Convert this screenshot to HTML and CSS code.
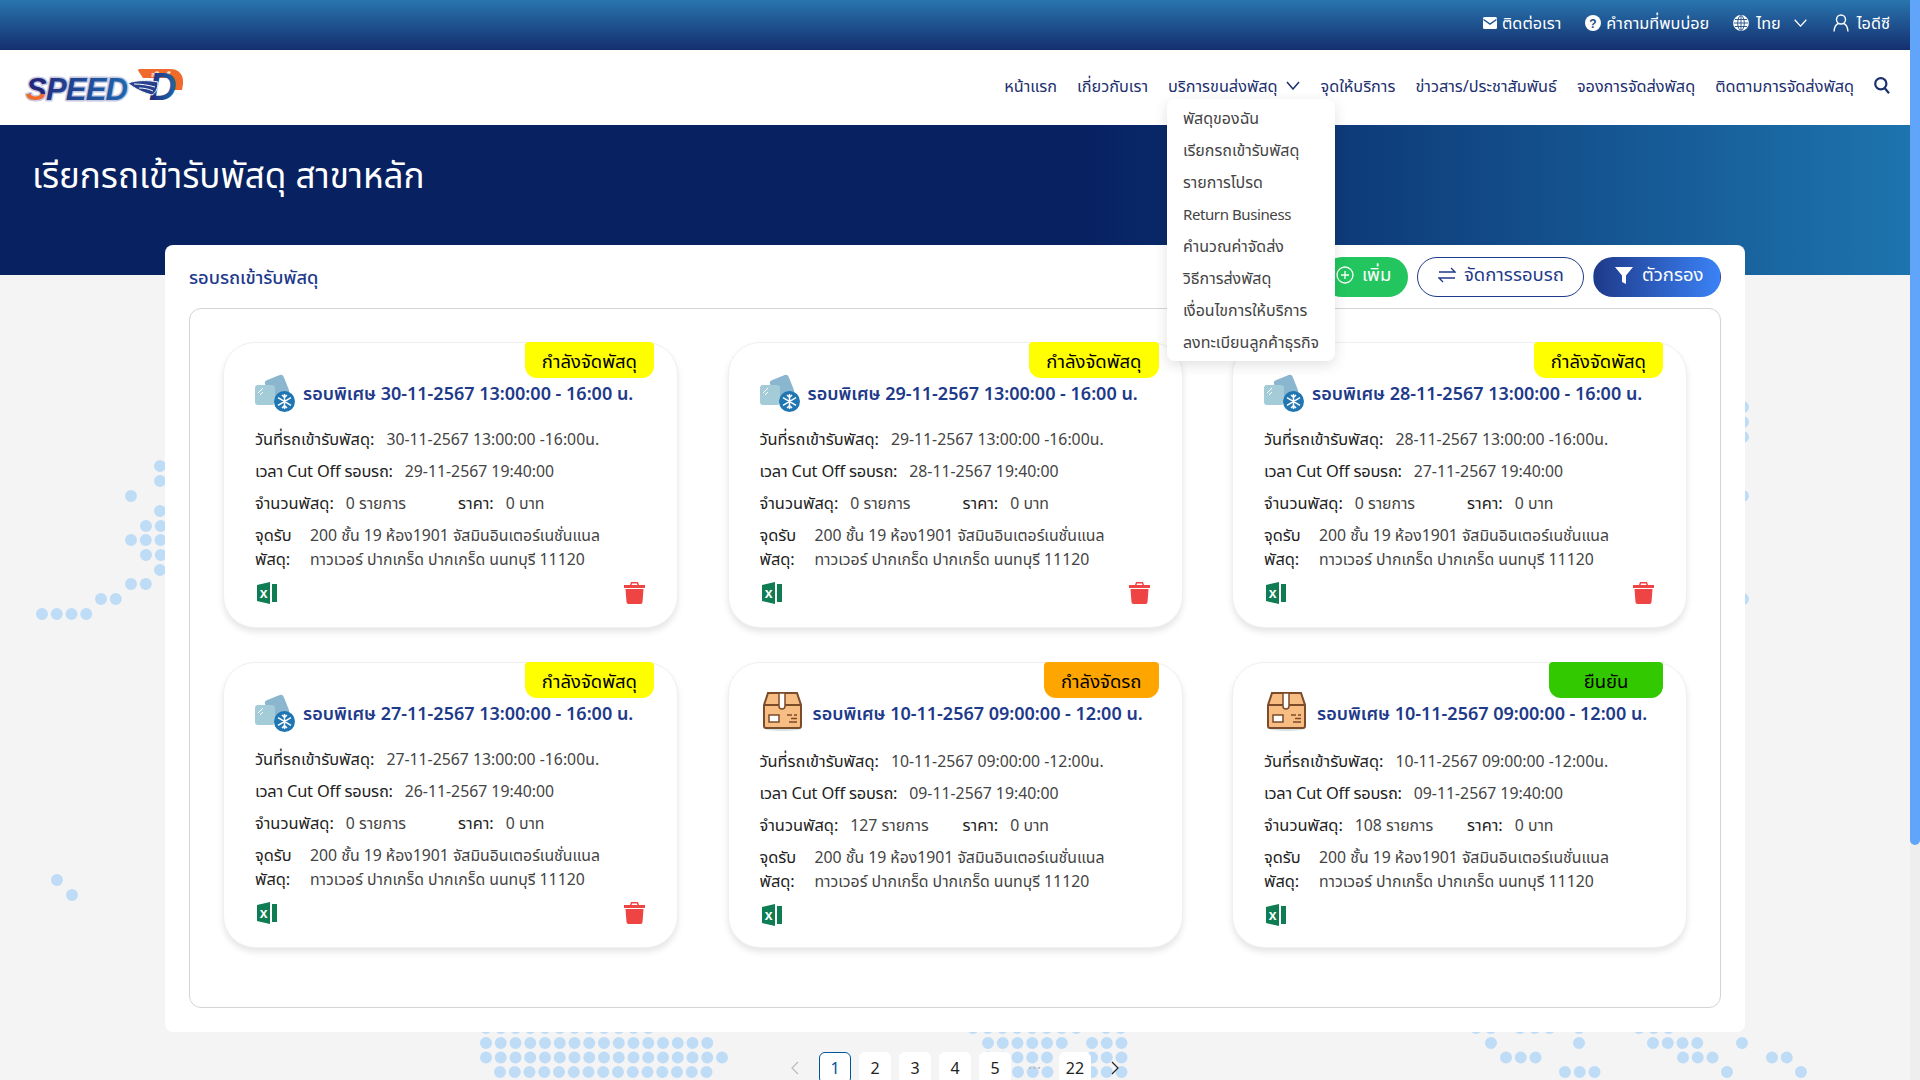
FILE: index.html
```html
<!DOCTYPE html>
<html lang="th">
<head>
<meta charset="utf-8">
<title>เรียกรถเข้ารับพัสดุ</title>
<link rel="stylesheet" href="styles.css">
</head>
<body>
<svg width="0" height="0" class="defs">
  <defs>
    <linearGradient id="logoBlue" x1="0" y1="0" x2="1" y2="0"><stop offset="0" stop-color="#23287a"/><stop offset="1" stop-color="#1d67ae"/></linearGradient>
    <linearGradient id="logoS" x1="0" y1="0" x2="0" y2="1"><stop offset="0" stop-color="#23287a"/><stop offset=".62" stop-color="#23287a"/><stop offset=".63" stop-color="#ef6a2b"/><stop offset="1" stop-color="#ef6a2b"/></linearGradient>
    <g id="ice">
      <rect x="12" y="5" width="20" height="20" rx="3" fill="#8ab6cf" transform="rotate(-22 22 15)"/>
      <rect x="0" y="13" width="20" height="20" rx="3" fill="#a3ccd8"/>
      <path d="M3 21l5-5M5 23l3-3" stroke="#fff" stroke-width="1" fill="none"/>
      <circle cx="29.500" cy="29.500" r="10.500" fill="#1f76b3"/>
      <path d="M29.500 22v15M23 25.700l13 7.600M23 33.300l13-7.600M27 23l2.500 2.500 2.500-2.500M27 36l2.500-2.500 2.500 2.500" stroke="#fff" stroke-width="1.500" fill="none"/>
    </g>
    <g id="box">
      <ellipse cx="19.500" cy="36.500" rx="18" ry="2.500" fill="#d4e3e3"/>
      <path d="M1 13L5 1h29l4 12v21a2 2 0 0 1-2 2H3a2 2 0 0 1-2-2z" fill="#f8bd82" stroke="#7b4b2a" stroke-width="2"/>
      <path d="M1 13h37" stroke="#7b4b2a" stroke-width="2"/>
      <path d="M16 1h6v13a3 3 0 0 1-6 0z" fill="#fff" stroke="#7b4b2a" stroke-width="1.500"/>
      <rect x="6" y="23" width="10" height="7" fill="#fff" stroke="#7b4b2a" stroke-width="1.500"/>
      <path d="M24 23h5M31 23h3M28 26.500h6M26 30h8" stroke="#7b4b2a" stroke-width="1.500"/>
    </g>
    <g id="excel">
      <path d="M0 3L13 0v22L0 19z" fill="#107c54"/>
      <path d="M15 2h5v18h-5z" fill="#107c54"/>
      <text x="2.700" y="15.500" class="excel-x">x</text>
    </g>
    <g id="trash">
      <path d="M7 0h7l1 3h6v3H0V3h6z" fill="#ef4444"/>
      <path d="M8 1.500h5l.5 1.500h-6z" fill="#fff"/>
      <path d="M1.500 7h18l-1 13a2 2 0 0 1-2 2h-12a2 2 0 0 1-2-2z" fill="#ef4444"/>
    </g>
  </defs>
</svg>

<div class="page">
  <svg class="dots" width="1910" height="1080" viewBox="0 0 1910 1080" aria-hidden="true">
    <path class="dots-line" d="M160 466h.01M160 481h.01M131 496h.01M160 511h.01M146 526H161M131 540H161M146 555H161M160 570h.01M131 584H147M101 599H117M42 614H88M57 880h.01M72 895h.01
      M486 1028H663M486 1043H708M486 1057.500H723M500 1072H708
      M973 1028H1078M988 1043H1063M988 1057.500H1048M1018 1072H1048M1106 1028H1122M1092 1043H1122M1092 1057.500H1122M1092 1072H1122
      M1476 1028H1492M1520 1028H1551M1579 1028h.01M1639 1028H1669M1491 1043h.01M1579 1043h.01M1653 1043H1699M1742 1043h.01M1506 1057.500H1536M1683 1057.500H1713M1772 1057.500H1787M1565 1072H1595M1727 1072h.01M1801 1072h.01
      M1743 407h.01M1743 422h.01M1743 437h.01M1743 496h.01M1743 599h.01"/>
  </svg>

  <header class="topbar">
    <a class="top-item">
      <svg width="14" height="12" viewBox="0 0 14 12"><rect width="14" height="12" rx="1.500" fill="#fff"/><path d="M0.500 2.500L7 7l6.500-4.500" fill="none" stroke="#1f5590" stroke-width="1.500"/></svg>
      <span>ติดต่อเรา</span>
    </a>
    <a class="top-item">
      <svg width="16" height="16" viewBox="0 0 16 16"><circle cx="8" cy="8" r="8" fill="#fff"/><text x="8" y="12.500" class="q-mark">?</text></svg>
      <span>คำถามที่พบบ่อย</span>
    </a>
    <a class="top-item top-lang">
      <svg width="16" height="16" viewBox="0 0 16 16" fill="none" stroke="#fff" stroke-width="1.300"><circle cx="8" cy="8" r="7.300" fill="#fff"/><g stroke="#1f4c86" stroke-width=".9"><ellipse cx="8" cy="8" rx="3.300" ry="7.300"/><path d="M8 .7v14.600M.7 8h14.600M1.800 4.500h12.400M1.800 11.500h12.400"/></g></svg>
      <span>ไทย</span>
      <svg class="top-chevron" width="13" height="8" viewBox="0 0 13 8" fill="none" stroke="#fff" stroke-width="1.300"><path d="M.7.7l5.800 6.400L12.300.7"/></svg>
    </a>
    <a class="top-item top-user">
      <svg width="16" height="18" viewBox="0 0 16 18" fill="none" stroke="#fff" stroke-width="1.400"><circle cx="8" cy="5.500" r="4.500"/><path d="M1 17.500c.4-4.500 2.500-7.500 4.500-8M15 17.500c-.4-4.500-2.500-7.500-4.500-8"/></svg>
      <span>ไอดีซี</span>
    </a>
  </header>

  <nav class="navbar">
    <svg class="logo" width="162" height="56" viewBox="0 -9 162 56" aria-label="Speed D">
      <path d="M114 1.500c0-1 1-1.500 2-1.500h30c9 0 14 6 13 15l-1 6h-8l-1-12h-30z" fill="#ef6a2b"/>
      <text x="127" y="7.500" class="logo-thai">สปีด ดี</text>
      <text x="125" y="31" class="logo-d">D</text>
      <path d="M104 14c9-3 20-3 30-1 0 6-2 11-6 13-8-2-17-6-24-12z" fill="#27408e" stroke="#fff" stroke-width="1"/>
      <path d="M110 15c7 0 14 1 21 3M115 19c5 0 10 1 14 3" stroke="#fff" stroke-width="1" fill="none"/>
      <text x="2" y="31" class="logo-text" textLength="102"><tspan class="logo-s">S</tspan>PEED</text>
    </svg>
    <ul class="menu">
      <li class="menu-item">หน้าแรก</li>
      <li class="menu-item">เกี่ยวกับเรา</li>
      <li class="menu-item menu-open">
        <span>บริการขนส่งพัสดุ</span>
        <svg class="menu-chevron" width="14" height="9" viewBox="0 0 14 9" fill="none" stroke="#1c2f6e" stroke-width="1.500"><path d="M1 1l6 7 6-7"/></svg>
        <ul class="dropdown">
          <li>พัสดุของฉัน</li>
          <li>เรียกรถเข้ารับพัสดุ</li>
          <li>รายการโปรด</li>
          <li class="dropdown-latin">Return Business</li>
          <li>คำนวณค่าจัดส่ง</li>
          <li>วิธีการส่งพัสดุ</li>
          <li>เงื่อนไขการให้บริการ</li>
          <li>ลงทะเบียนลูกค้าธุรกิจ</li>
        </ul>
      </li>
      <li class="menu-item">จุดให้บริการ</li>
      <li class="menu-item">ข่าวสาร/ประชาสัมพันธ์</li>
      <li class="menu-item">จองการจัดส่งพัสดุ</li>
      <li class="menu-item">ติดตามการจัดส่งพัสดุ</li>
      <li class="menu-item">
        <svg width="16" height="17" viewBox="0 0 16 17" fill="none" stroke="#1c2f6e" stroke-width="2.200"><circle cx="6.800" cy="6.800" r="5.600"/><path d="M10.800 11.200l4.200 5"/></svg>
      </li>
    </ul>
  </nav>

  <section class="banner">
    <h1>เรียกรถเข้ารับพัสดุ สาขาหลัก</h1>
  </section>

  <main class="panel">
    <div class="panel-head">
      <h2>รอบรถเข้ารับพัสดุ</h2>
      <div class="actions">
        <button class="btn btn-add">
          <svg width="18" height="18" viewBox="0 0 18 18" fill="none" stroke="#fff" stroke-width="1.300"><circle cx="9" cy="9" r="8"/><path d="M9 5v8M5 9h8"/></svg>
          เพิ่ม
        </button>
        <button class="btn btn-manage">
          <svg width="18" height="16" viewBox="0 0 18 16" fill="none" stroke="#1e3a8a" stroke-width="1.300"><path d="M1 5h16L13 1M17 11H1l4 4"/></svg>
          จัดการรอบรถ
        </button>
        <button class="btn btn-filter">
          <svg width="20" height="20" viewBox="0 0 20 20" fill="#fff"><path d="M1 2h18l-7 8.500V19l-4-2v-6.500z"/></svg>
          ตัวกรอง
        </button>
      </div>
    </div>

    <div class="rounds">
      <article class="round">
        <span class="badge badge-packing">กำลังจัดพัสดุ</span>
        <div class="round-head">
          <svg class="round-icon" width="40" height="40" viewBox="0 0 40 40"><use href="#ice"/></svg>
          <h3>รอบพิเศษ 30-11-2567 13:00:00 - 16:00 น.</h3>
        </div>
        <p class="line"><b>วันที่รถเข้ารับพัสดุ:</b><span>30-11-2567 13:00:00 -16:00น.</span></p>
        <p class="line"><b>เวลา Cut Off รอบรถ:</b><span>29-11-2567 19:40:00</span></p>
        <div class="line-pair"><p class="line"><b>จำนวนพัสดุ:</b><span>0 รายการ</span></p><p class="line"><b>ราคา:</b><span>0 บาท</span></p></div>
        <div class="address"><b>จุดรับ<br>พัสดุ:</b><span>200 ชั้น 19 ห้อง1901 จัสมินอินเตอร์เนชั่นแนล<br>ทาวเวอร์ ปากเกร็ด ปากเกร็ด นนทบุรี 11120</span></div>
        <div class="round-foot">
          <svg class="excel" width="20" height="22" viewBox="0 0 20 22"><use href="#excel"/></svg>
          <svg width="21" height="22" viewBox="0 0 21 22"><use href="#trash"/></svg>
        </div>
      </article>

      <article class="round">
        <span class="badge badge-packing">กำลังจัดพัสดุ</span>
        <div class="round-head">
          <svg class="round-icon" width="40" height="40" viewBox="0 0 40 40"><use href="#ice"/></svg>
          <h3>รอบพิเศษ 29-11-2567 13:00:00 - 16:00 น.</h3>
        </div>
        <p class="line"><b>วันที่รถเข้ารับพัสดุ:</b><span>29-11-2567 13:00:00 -16:00น.</span></p>
        <p class="line"><b>เวลา Cut Off รอบรถ:</b><span>28-11-2567 19:40:00</span></p>
        <div class="line-pair"><p class="line"><b>จำนวนพัสดุ:</b><span>0 รายการ</span></p><p class="line"><b>ราคา:</b><span>0 บาท</span></p></div>
        <div class="address"><b>จุดรับ<br>พัสดุ:</b><span>200 ชั้น 19 ห้อง1901 จัสมินอินเตอร์เนชั่นแนล<br>ทาวเวอร์ ปากเกร็ด ปากเกร็ด นนทบุรี 11120</span></div>
        <div class="round-foot">
          <svg class="excel" width="20" height="22" viewBox="0 0 20 22"><use href="#excel"/></svg>
          <svg width="21" height="22" viewBox="0 0 21 22"><use href="#trash"/></svg>
        </div>
      </article>

      <article class="round">
        <span class="badge badge-packing">กำลังจัดพัสดุ</span>
        <div class="round-head">
          <svg class="round-icon" width="40" height="40" viewBox="0 0 40 40"><use href="#ice"/></svg>
          <h3>รอบพิเศษ 28-11-2567 13:00:00 - 16:00 น.</h3>
        </div>
        <p class="line"><b>วันที่รถเข้ารับพัสดุ:</b><span>28-11-2567 13:00:00 -16:00น.</span></p>
        <p class="line"><b>เวลา Cut Off รอบรถ:</b><span>27-11-2567 19:40:00</span></p>
        <div class="line-pair"><p class="line"><b>จำนวนพัสดุ:</b><span>0 รายการ</span></p><p class="line"><b>ราคา:</b><span>0 บาท</span></p></div>
        <div class="address"><b>จุดรับ<br>พัสดุ:</b><span>200 ชั้น 19 ห้อง1901 จัสมินอินเตอร์เนชั่นแนล<br>ทาวเวอร์ ปากเกร็ด ปากเกร็ด นนทบุรี 11120</span></div>
        <div class="round-foot">
          <svg class="excel" width="20" height="22" viewBox="0 0 20 22"><use href="#excel"/></svg>
          <svg width="21" height="22" viewBox="0 0 21 22"><use href="#trash"/></svg>
        </div>
      </article>

      <article class="round">
        <span class="badge badge-packing">กำลังจัดพัสดุ</span>
        <div class="round-head">
          <svg class="round-icon" width="40" height="40" viewBox="0 0 40 40"><use href="#ice"/></svg>
          <h3>รอบพิเศษ 27-11-2567 13:00:00 - 16:00 น.</h3>
        </div>
        <p class="line"><b>วันที่รถเข้ารับพัสดุ:</b><span>27-11-2567 13:00:00 -16:00น.</span></p>
        <p class="line"><b>เวลา Cut Off รอบรถ:</b><span>26-11-2567 19:40:00</span></p>
        <div class="line-pair"><p class="line"><b>จำนวนพัสดุ:</b><span>0 รายการ</span></p><p class="line"><b>ราคา:</b><span>0 บาท</span></p></div>
        <div class="address"><b>จุดรับ<br>พัสดุ:</b><span>200 ชั้น 19 ห้อง1901 จัสมินอินเตอร์เนชั่นแนล<br>ทาวเวอร์ ปากเกร็ด ปากเกร็ด นนทบุรี 11120</span></div>
        <div class="round-foot">
          <svg class="excel" width="20" height="22" viewBox="0 0 20 22"><use href="#excel"/></svg>
          <svg width="21" height="22" viewBox="0 0 21 22"><use href="#trash"/></svg>
        </div>
      </article>

      <article class="round round-box">
        <span class="badge badge-truck">กำลังจัดรถ</span>
        <div class="round-head">
          <svg class="round-icon" width="40" height="40" viewBox="0 0 40 40"><use href="#box"/></svg>
          <h3>รอบพิเศษ 10-11-2567 09:00:00 - 12:00 น.</h3>
        </div>
        <p class="line"><b>วันที่รถเข้ารับพัสดุ:</b><span>10-11-2567 09:00:00 -12:00น.</span></p>
        <p class="line"><b>เวลา Cut Off รอบรถ:</b><span>09-11-2567 19:40:00</span></p>
        <div class="line-pair"><p class="line"><b>จำนวนพัสดุ:</b><span>127 รายการ</span></p><p class="line"><b>ราคา:</b><span>0 บาท</span></p></div>
        <div class="address"><b>จุดรับ<br>พัสดุ:</b><span>200 ชั้น 19 ห้อง1901 จัสมินอินเตอร์เนชั่นแนล<br>ทาวเวอร์ ปากเกร็ด ปากเกร็ด นนทบุรี 11120</span></div>
        <div class="round-foot">
          <svg class="excel" width="20" height="22" viewBox="0 0 20 22"><use href="#excel"/></svg>
        </div>
      </article>

      <article class="round round-box">
        <span class="badge badge-ok">ยืนยัน</span>
        <div class="round-head">
          <svg class="round-icon" width="40" height="40" viewBox="0 0 40 40"><use href="#box"/></svg>
          <h3>รอบพิเศษ 10-11-2567 09:00:00 - 12:00 น.</h3>
        </div>
        <p class="line"><b>วันที่รถเข้ารับพัสดุ:</b><span>10-11-2567 09:00:00 -12:00น.</span></p>
        <p class="line"><b>เวลา Cut Off รอบรถ:</b><span>09-11-2567 19:40:00</span></p>
        <div class="line-pair"><p class="line"><b>จำนวนพัสดุ:</b><span>108 รายการ</span></p><p class="line"><b>ราคา:</b><span>0 บาท</span></p></div>
        <div class="address"><b>จุดรับ<br>พัสดุ:</b><span>200 ชั้น 19 ห้อง1901 จัสมินอินเตอร์เนชั่นแนล<br>ทาวเวอร์ ปากเกร็ด ปากเกร็ด นนทบุรี 11120</span></div>
        <div class="round-foot">
          <svg class="excel" width="20" height="22" viewBox="0 0 20 22"><use href="#excel"/></svg>
        </div>
      </article>
    </div>
  </main>

  <ul class="pager">
    <li class="pager-arrow pager-off"><svg width="10" height="14" viewBox="0 0 10 14" fill="none" stroke="currentColor" stroke-width="1.200"><path d="M8 1L2 7l6 6"/></svg></li>
    <li class="pager-num pager-on">1</li>
    <li class="pager-num">2</li>
    <li class="pager-num">3</li>
    <li class="pager-num">4</li>
    <li class="pager-num">5</li>
    <li class="pager-more">•••</li>
    <li class="pager-num">22</li>
    <li class="pager-arrow"><svg width="10" height="14" viewBox="0 0 10 14" fill="none" stroke="currentColor" stroke-width="1.200"><path d="M2 1l6 6-6 6"/></svg></li>
  </ul>
</div>

<div class="scrollbar"><div class="scrollbar-thumb"></div></div>
</body>
</html>
```

FILE: styles.css
```css
* { box-sizing: border-box; }
html, body { margin: 0; padding: 0; height: 1080px; overflow: hidden; }
body {
  background: #f4f4f4;
  font-family: "Noto Sans", "Open Sans", "Noto Sans Thai", sans-serif;
  color: #333;
}
ul { list-style: none; margin: 0; padding: 0; }
h1, h2, h3, p { margin: 0; font-weight: 400; }
.defs { position: absolute; }

.page { position: relative; width: 1910px; height: 1080px; overflow: hidden; }
.dots { position: absolute; left: 0; top: 0; }
.dots-line { fill: none; stroke: #bfdcf7; stroke-width: 12; stroke-linecap: round; stroke-dasharray: 0 14.75; }

.topbar {
  position: relative;
  height: 50px;
  display: flex;
  justify-content: flex-end;
  align-items: center;
  gap: 24px;
  padding: 0 20px 4px 0;
  background: linear-gradient(180deg, #2875af 0%, #152f6e 100%);
  color: #fff;
  font-size: 16.300px;
  line-height: 24px;
}
.top-item { display: flex; align-items: center; gap: 5px; }
.top-lang { gap: 7px; }
.top-chevron { margin-left: 6px; }
.top-user { gap: 8px; margin-left: 2px; }
.q-mark { font: 700 12px "Liberation Sans", sans-serif; fill: #1f4c86; text-anchor: middle; }

.navbar {
  position: relative;
  z-index: 5;
  height: 75px;
  background: #fff;
  display: flex;
  align-items: center;
  justify-content: space-between;
  padding: 0 20px 0 24px;
}
.logo { display: block; }
.logo-text {
  font: italic 700 31px "Liberation Sans", sans-serif;
  fill: url(#logoBlue);
  stroke: #c9c9e2;
  stroke-width: 3;
  stroke-linejoin: round;
  paint-order: stroke fill;
}
.logo-s { fill: url(#logoS); }
.logo-d { font: italic 700 38px "Liberation Sans", sans-serif; fill: url(#logoBlue); }
.logo-thai { font: 400 7px "Noto Sans", sans-serif; fill: #fff; }
.menu { display: flex; align-items: center; gap: 20px; margin-top: -4px; font-size: 16.250px; color: #1c2f6e; line-height: 24px; }
.menu-item { display: flex; align-items: center; white-space: nowrap; }
.menu-open { position: relative; gap: 9px; }
.dropdown {
  position: absolute;
  left: -1px;
  top: 25px;
  width: 168px;
  padding: 3px 16px;
  background: #fff;
  border-radius: 8px;
  box-shadow: 0 4px 14px rgba(0, 0, 0, .12);
  color: #444;
  font-size: 16px;
}
.dropdown li { height: 32px; line-height: 32px; }
.dropdown .dropdown-latin { font-size: 15px; letter-spacing: -.4px; }

.banner {
  height: 150px;
  padding: 30px 32px 0;
  background: linear-gradient(90deg, #072161 0%, #072161 57%, #1d74ae 100%);
  color: #fff;
}
.banner h1 { font-size: 35px; line-height: 40px; }

.panel {
  position: relative;
  z-index: 1;
  width: 1580px;
  height: 787px;
  margin: -30px 0 0 165px;
  padding: 0 24px;
  background: #fff;
  border-radius: 8px;
}
.panel-head { height: 63px; display: flex; justify-content: space-between; padding-top: 12px; }
.panel-head h2 { font-size: 18.300px; font-weight: 500; line-height: 40px; color: #1e3a8a; }
.actions { display: flex; gap: 9px; height: 40px; }
.btn {
  display: flex;
  align-items: center;
  gap: 8px;
  height: 40px;
  border-radius: 20px;
  font: inherit;
  font-size: 18.500px;
  border: 1px solid transparent;
  white-space: nowrap;
}
.btn-add { background: #22c55e; color: #fff; width: 86px; padding: 0 0 4px 13px; }
.btn-manage { background: #fff; color: #1e3a8a; border-color: #1e3a8a; width: 167px; padding: 0 0 4px 20px; }
.btn-filter { background: linear-gradient(90deg, #1e3a8a, #3b82f6); color: #fff; width: 128px; padding: 0 0 4px 20px; }

.rounds {
  height: 700px;
  display: grid;
  grid-template-columns: repeat(3, 455px);
  grid-auto-rows: 286px;
  column-gap: 49.500px;
  row-gap: 34px;
  padding: 33px;
  border: 1px solid #d4d4d4;
  border-radius: 12px;
}
.round {
  position: relative;
  padding: 29px 31px 23px;
  background: #fff;
  border-radius: 32px;
  border: 1px solid #f0f0f0;
  box-shadow: 0 4px 6px rgba(0, 0, 0, .1);
  font-size: 15.800px;
  line-height: 24px;
  color: #444;
}
.round-box { padding-bottom: 21px; }
.round-head { display: flex; align-items: center; gap: 8px; height: 40px; margin-bottom: 15px; }
.round-box .round-head { gap: 10px; margin-bottom: 17px; }
.round-box .round-icon { margin-left: 3px; }
.round-head h3 { margin-top: 2px; font-size: 18px; font-weight: 600; line-height: 24px; color: #1e3a8a; white-space: nowrap; }
.badge {
  position: absolute;
  top: -1px;
  right: 23px;
  height: 36px;
  padding: 0 17px;
  border-radius: 4px 4px 12px 12px;
  font-size: 18.500px;
  line-height: 38px;
  color: #000;
}
.badge-packing { background: #ff0; }
.badge-truck { background: #ffa500; }
.badge-ok { background: #33c900; width: 114px; text-align: center; }
.line { margin-bottom: 8px; white-space: nowrap; }
.line b { font-size: 16.400px; font-weight: 400; color: #222; margin-right: 12px; }
.round > .line:nth-of-type(2) b { letter-spacing: -.2px; }
.line-pair { display: grid; grid-template-columns: 203px 1fr; }
.address { display: grid; grid-template-columns: 55px 1fr; margin-bottom: 11px; white-space: nowrap; }
.address b { font-size: 16.400px; font-weight: 400; color: #222; }
.round-foot { display: flex; justify-content: space-between; height: 22px; padding: 0 1px 0 2px; }
.excel-x { font: 700 14px "Liberation Sans", sans-serif; fill: #fff; }

.pager {
  position: relative;
  z-index: 1;
  display: flex;
  gap: 8px;
  margin: 20px 0 0 779px;
  font-size: 16px;
  color: #222;
}
.pager li { width: 32px; height: 32px; line-height: 32px; text-align: center; border-radius: 6px; }
.pager-num { background: #fff; }
.pager-on { border: 1px solid #00559b; line-height: 30px !important; color: #00559b; }
.pager-arrow { display: flex; align-items: center; justify-content: center; }
.pager-off { color: #bbb; }
.pager-more { color: #bbb; font-size: 9px; letter-spacing: 1px; }

.scrollbar { position: fixed; top: 0; right: 0; bottom: 0; width: 10px; background: #eee; }
.scrollbar-thumb { height: 845px; background: #60a5fa; border-radius: 0 0 5px 5px; }
```
